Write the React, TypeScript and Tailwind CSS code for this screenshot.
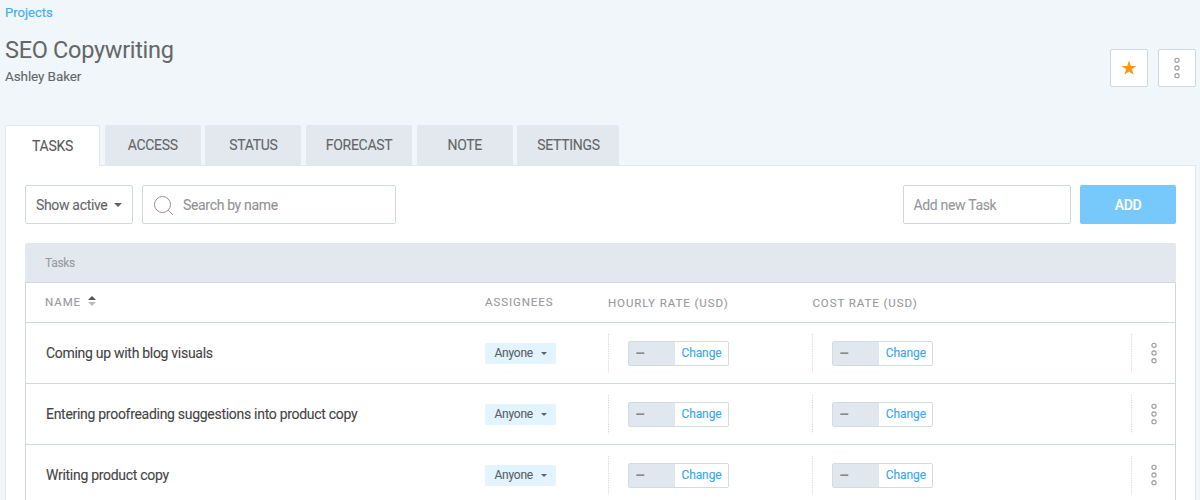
import React from "react";

const TABS = [
  { label: "TASKS", width: "w-[95px]" },
  { label: "ACCESS", width: "w-[96px]" },
  { label: "STATUS", width: "w-[96px]" },
  { label: "FORECAST", width: "w-[106px]" },
  { label: "NOTE", width: "w-[96px]" },
  { label: "SETTINGS", width: "w-[102px]" },
];

const TASKS = [
  "Coming up with blog visuals",
  "Entering proofreading suggestions into product copy",
  "Writing product copy",
];

function Dots() {
  return (
    <svg width="8" height="22" viewBox="0 0 8 22" fill="none" stroke="#9b9b9b" strokeWidth="1.1">
      <circle cx="4" cy="3.3" r="2.1" />
      <circle cx="4" cy="11" r="2.1" />
      <circle cx="4" cy="18.7" r="2.1" />
    </svg>
  );
}

function Caret({ small = false }: { small?: boolean }) {
  return (
    <svg className="shrink-0" width={small ? 6 : 8} height={small ? 3 : 4} viewBox="0 0 8 4" fill="#5f6163">
      <path d="M0 0h8L4 4z" />
    </svg>
  );
}

function DottedRule() {
  return (
    <svg width="1" height="39" className="shrink-0">
      <path d="M.5 0v39" stroke="#d6d8d9" strokeDasharray="1.2 1.2" />
    </svg>
  );
}

function Rate() {
  return (
    <div className="flex h-[39px] w-[204.4px] shrink-0 items-center">
      <DottedRule />
      <div className="ml-[19px] flex h-[25px] w-[101px] overflow-hidden rounded-[2px] border border-[#d5dce1] bg-white">
        <div className="flex w-[46px] items-center bg-[#e1e7ee] pl-[7px]">
          <svg width="9" height="3" viewBox="0 0 9 3">
            <path d="M.3 1.2h8" stroke="#6a6c6e" strokeWidth="1.3" />
          </svg>
        </div>
        <button className="flex-1 text-[12px] leading-[23px] tracking-[-0.1px] text-[#37a6f0]">Change</button>
      </div>
    </div>
  );
}

function TaskRow({ name }: { name: string }) {
  return (
    <div className="flex h-[61px] items-center border-b border-[#d0d8dc]">
      <div className="w-[459px] shrink-0 pl-[20px] text-[14px] leading-[20px] tracking-[-0.29px] text-[#434343]">
        {name}
      </div>
      <div className="w-[123px] shrink-0">
        <button className="flex h-[21px] w-[71px] items-center justify-between rounded-[2px] bg-[#e1f4ff] pr-[9px] pl-[9.5px] text-[12px] tracking-[-0.25px] text-[#5b5f62]">
          Anyone
          <Caret small />
        </button>
      </div>
      <Rate />
      <Rate />
      <div className="flex flex-1 justify-end">
        <div className="flex h-[39px] w-[44px] items-center">
          <DottedRule />
          <button className="ml-[17.5px]">
            <Dots />
          </button>
        </div>
      </div>
    </div>
  );
}

export default function App() {
  return (
    <div className="h-[500px] w-[1200px] overflow-hidden bg-[#f0f6fa] px-[5px] font-[Roboto,sans-serif] text-[#646668] [-webkit-text-stroke:0.1px]">
      <header className="flex h-[125px] justify-between">
        <div>
          <a className="mt-[4px] block text-[13px] leading-[18px] text-[#45aeef] [-webkit-text-stroke:0.2px]">Projects</a>
          <h1 className="mt-[13px] text-[23.5px] leading-[30px] tracking-[-0.3px] [-webkit-text-stroke:0]">SEO Copywriting</h1>
          <p className="mt-[2px] text-[13.5px] leading-[18px] tracking-[-0.1px]">Ashley Baker</p>
        </div>
        <div className="mt-[49px] -mr-[1px] flex gap-[10px]">
          <button className="flex size-[38px] items-center justify-center rounded-[2px] border border-[#d0dadd] bg-white">
            <svg width="16" height="16" viewBox="0 0 16 16" fill="#f6990f">
              <path d="M8 .6 9.8 6h5.6l-4.5 3.3 1.7 5.5L8 11.5l-4.6 3.3 1.7-5.5L.6 6h5.6z" />
            </svg>
          </button>
          <button className="flex size-[38px] items-center justify-center rounded-[2px] border border-[#d0dadd] bg-white">
            <Dots />
          </button>
        </div>
      </header>

      <nav className="flex h-[40px] gap-[4.7px]">
        {TABS.map((tab, i) => (
          <button
            key={tab.label}
            className={
              i === 0
                ? `z-10 -mb-px h-[41px] shrink-0 rounded-t-[2px] border border-b-0 border-[#dfe8ee] bg-white text-[14px] tracking-[-0.3px] text-[#58595b] ${tab.width}`
                : `shrink-0 rounded-t-[2px] bg-[#e3e8ee] pt-[1px] text-[14px] tracking-[-0.3px] ${tab.width}`
            }
          >
            {tab.label}
          </button>
        ))}
      </nav>

      <main className="h-[340px] w-[1191px] border border-[#dfe8ee] bg-white px-[19px] pt-[19px]">
        <div className="flex h-[39px] text-[14px] leading-[22px] tracking-[-0.33px]">
          <button className="flex w-[108px] items-center justify-between rounded-[2px] border border-[#d0dadd] px-[10px] pt-px whitespace-nowrap">
            Show active
            <Caret />
          </button>
          <div className="ml-[9px] flex w-[254px] items-center rounded-[2px] border border-[#d0dadd] pt-px pl-[9.5px] text-[#909294]">
            <svg width="21" height="21" viewBox="0 0 21 21" fill="none" stroke="#8f9294" strokeWidth="1">
              <circle cx="9.5" cy="9.5" r="8" />
              <path d="m15.2 15.2 4.6 4.6" />
            </svg>
            <span className="ml-[9.5px]">Search by name</span>
          </div>
          <div className="ml-auto flex w-[168px] items-center rounded-[2px] border border-[#d0d6d9] pt-px pl-[9.5px] text-[#959799]">
            Add new Task
          </div>
          <button className="ml-[9px] w-[96px] rounded-[2px] bg-[#77c8fb] pt-px font-medium text-white">ADD</button>
        </div>

        <section className="mt-[19px]">
          <div className="h-[39px] rounded-t-[2px] bg-[#e3e8ee] pl-[20px] text-[12px] leading-[40px] tracking-[-0.3px] text-[#999b9d]">
            Tasks
          </div>
          <div className="border border-[#d0d8dc]">
            <div className="flex h-[40px] border-b border-[#d0d8dc] text-[11.5px] leading-[38px] tracking-[0.92px] text-[#97999b]">
              <div className="flex h-[38px] w-[459px] items-center pl-[19px]">
                NAME
                <svg className="mb-[2px] ml-[7px]" width="8" height="10" viewBox="0 0 8 10">
                  <path d="M0 4h8L4 0z" fill="#555" />
                  <path d="M0 6h8L4 10z" fill="#b9bbbd" />
                </svg>
              </div>
              <div className="w-[123px]">ASSIGNEES</div>
              <div className="w-[204.4px] pt-px">HOURLY RATE (USD)</div>
              <div className="pt-px">COST RATE (USD)</div>
            </div>
            {TASKS.map((name) => (
              <TaskRow key={name} name={name} />
            ))}
          </div>
        </section>
      </main>
    </div>
  );
}
